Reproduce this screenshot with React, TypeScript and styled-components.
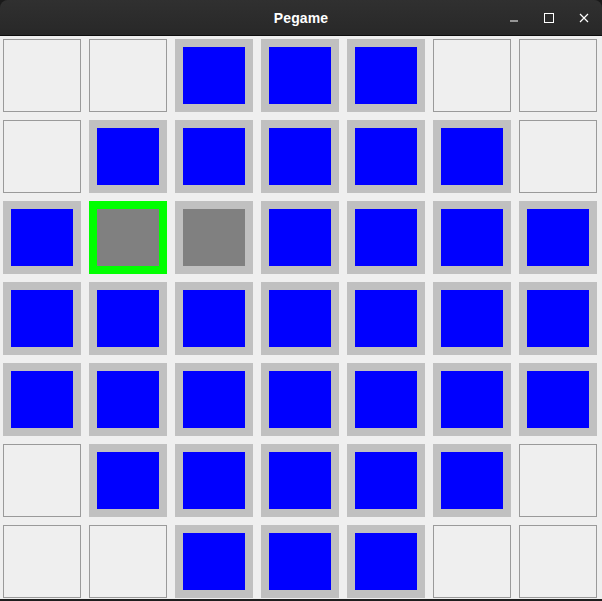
import React, { useState } from 'react'
import styled, { createGlobalStyle } from 'styled-components'

const GlobalStyle = createGlobalStyle`
  * {
    margin: 0;
    padding: 0;
    box-sizing: border-box;
  }

  body {
    background: #1a1a1a;
    font-family: 'Liberation Sans', Arial, sans-serif;
  }
`;

const Window = styled.div`
  width: 602px;
  height: 601px;
  display: flex;
  flex-direction: column;
  background: #1e1e1e;
  border-radius: 8px 8px 0 0;
  overflow: hidden;
`;

const TitleBar = styled.div`
  height: 36px;
  flex-shrink: 0;
  position: relative;
  display: flex;
  align-items: center;
  justify-content: center;
  background: linear-gradient(#303030, #282828);
  border-bottom: 1px solid #0e0e0e;
`;

const Title = styled.span`
  color: #ffffff;
  font-weight: 700;
  font-size: 14px;
  letter-spacing: 0.1px;
`;

const Controls = styled.div`
  position: absolute;
  right: 9px;
  top: 0;
  height: 35px;
  display: flex;
  align-items: center;
  gap: 17px;
`;

const ControlButton = styled.div`
  width: 18px;
  height: 18px;
  display: flex;
  align-items: center;
  justify-content: center;
`;

const Board = styled.div`
  flex: 1;
  background: #efefef;
  padding: 3px 5px 1px 3px;
  display: grid;
  grid-template-columns: repeat(7, 78px);
  grid-template-rows: repeat(7, 73px);
  gap: 8px;
  margin-bottom: 2px;
`;

type Kind = 'off' | 'peg' | 'hole' | 'selected';

const Cell = styled.div<{ $kind: Kind }>`
  padding: 8px;
  background: ${p => (p.$kind === 'off' ? '#efefef' : p.$kind === 'selected' ? '#00ff00' : '#c0c0c0')};
  border: ${p => (p.$kind === 'off' ? '1px solid #9a9a9a' : 'none')};
  display: flex;
`;

const Peg = styled.div<{ $filled: boolean }>`
  flex: 1;
  background: ${p => (p.$filled ? '#0000ff' : '#808080')};
`;

const layout = [
  'xxPPPxx',
  'xPPPPPx',
  'PSHPPPP',
  'PPPPPPP',
  'PPPPPPP',
  'xPPPPPx',
  'xxPPPxx',
];

const toKind = (c: string): Kind =>
  c === 'x' ? 'off' : c === 'S' ? 'selected' : c === 'H' ? 'hole' : 'peg';

export default function App() {
  const [cells] = useState<Kind[]>(() => layout.join('').split('').map(toKind));

  return (
    <>
      <GlobalStyle />
      <Window>
        <TitleBar>
          <Title>Pegame</Title>
          <Controls>
            <ControlButton>
              <svg width="10" height="10" viewBox="0 0 10 10">
                <path d="M1 8h8" stroke="#fff" strokeWidth="1" />
              </svg>
            </ControlButton>
            <ControlButton>
              <svg width="10" height="10" viewBox="0 0 10 10">
                <rect x="0.5" y="0.5" width="9" height="9" fill="none" stroke="#fff" strokeWidth="1" />
              </svg>
            </ControlButton>
            <ControlButton>
              <svg width="10" height="10" viewBox="0 0 10 10">
                <path d="M1 1L9 9M9 1L1 9" stroke="#fff" strokeWidth="1.2" />
              </svg>
            </ControlButton>
          </Controls>
        </TitleBar>
        <Board>
          {cells.map((kind, i) => (
            <Cell key={i} $kind={kind}>
              {kind !== 'off' && <Peg $filled={kind === 'peg'} />}
            </Cell>
          ))}
        </Board>
      </Window>
    </>
  )
}
